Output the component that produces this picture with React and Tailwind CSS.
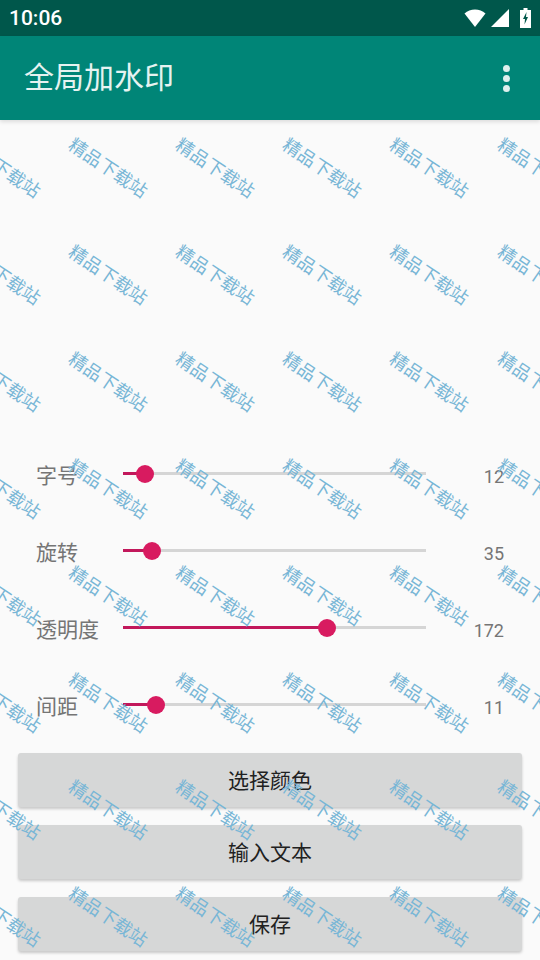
import React from 'react';

const cjk = "font-['Roboto','Noto_Sans_CJK_SC',sans-serif]";

const sliders = [
  { label: '字号', value: 12, thumb: 22 },
  { label: '旋转', value: 35, thumb: 29 },
  { label: '透明度', value: 172, thumb: 204 },
  { label: '间距', value: 11, thumb: 33 },
];

const cols = [-39, 68, 175, 282, 389, 497];
const rows = [136, 243, 350, 457, 564, 671, 778, 885];

function Watermarks() {
  return (
    <div className="absolute inset-0 overflow-hidden pointer-events-none">
      {rows.map((y) =>
        cols.map((x) => (
          <span
            key={`${x}-${y}`}
            className="absolute whitespace-nowrap text-[18px] leading-[24px] [word-spacing:-4px] text-[#78b6d6] origin-top-left rotate-[34deg]"
            style={{ left: x + 9, top: y - 3 }}
          >
            精品 下载站
          </span>
        ))
      )}
    </div>
  );
}

function SliderRow({ label, value, thumb }) {
  return (
    <div className="flex items-center h-[77px]">
      <span className="w-[86px] -ml-px pt-[5px] text-[21px] text-[#757575] leading-none">{label}</span>
      <div className="relative ml-px w-[303px] h-[3px] bg-[#d5d5d5]">
        <div className="h-full bg-[#c2185b]" style={{ width: thumb }} />
        <div
          className="absolute top-1/2 -translate-x-1/2 -translate-y-1/2 w-[18px] h-[18px] rounded-full bg-[#d81b60]"
          style={{ left: thumb }}
        />
      </div>
      <span className="w-[78px] text-right text-[18px] text-[#757575] leading-none pt-[6px]">{value}</span>
    </div>
  );
}

function ActionButton({ children }) {
  return (
    <button className="w-full h-[54px] pt-[3px] rounded-[3px] bg-[#d6d7d7] text-[21px] text-[#212121] shadow-[0_2px_3px_rgba(0,0,0,0.2)]">
      {children}
    </button>
  );
}

export default function App() {
  return (
    <div className={`relative w-[540px] h-[960px] overflow-hidden bg-[#fafafa] ${cjk}`}>
      {/* Status bar */}
      <div className="h-9 bg-[#00574b] flex items-center justify-between pl-[9px] pr-[9px] text-white">
        <span className="text-[21px] font-medium leading-none">10:06</span>
        <div className="flex items-center gap-[5px]">
          <svg width="22" height="18" viewBox="0 0 22 18">
            <path d="M0.5 4.5C3.5 2 7 0.5 11 0.5S18.5 2 21.5 4.5L11 18Z" fill="#fff" />
          </svg>
          <svg width="18" height="18" viewBox="0 0 18 18">
            <path d="M0 18L18 0V18Z" fill="#fff" />
          </svg>
          <svg className="ml-[6px]" width="11" height="20" viewBox="0 0 11 20">
            <path d="M3.5 0H7.5V2H11V20H0V2H3.5Z" fill="#fff" />
            <path d="M6.5 4L3 11H5L4.5 16.5L8 9H6Z" fill="#00574b" />
          </svg>
        </div>
      </div>

      {/* App bar */}
      <div className="h-[84px] bg-[#008577] flex items-center justify-between pl-6 pr-[30px] shadow-[0_2px_4px_rgba(0,0,0,0.12)]">
        <span className="text-[30px] text-[#e6f3f1] leading-none">全局加水印</span>
        <div className="flex flex-col gap-[3px]">
          <span className="w-[7px] h-[7px] rounded-full bg-[#dff0ee]" />
          <span className="w-[7px] h-[7px] rounded-full bg-[#dff0ee]" />
          <span className="w-[7px] h-[7px] rounded-full bg-[#dff0ee]" />
        </div>
      </div>

      {/* Sliders */}
      <div className="pt-[315px] pl-[37px]">
        {sliders.map((s) => (
          <SliderRow key={s.label} {...s} />
        ))}
      </div>

      {/* Buttons */}
      <div className="mt-[10px] px-[18px] flex flex-col gap-[18px]">
        <ActionButton>选择颜色</ActionButton>
        <ActionButton>输入文本</ActionButton>
        <ActionButton>保存</ActionButton>
      </div>

      <Watermarks />
    </div>
  );
}
